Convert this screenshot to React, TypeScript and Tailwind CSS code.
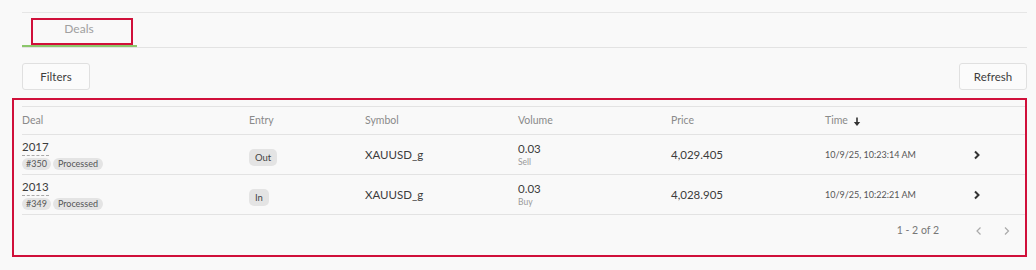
const rows = [
  { deal: "2017", id: "#350", entry: "Out", symbol: "XAUUSD_g", volume: "0.03", side: "Sell", price: "4,029.405", time: "10/9/25, 10:23:14 AM" },
  { deal: "2013", id: "#349", entry: "In", symbol: "XAUUSD_g", volume: "0.03", side: "Buy", price: "4,028.905", time: "10/9/25, 10:22:21 AM" },
];

const cols = "grid grid-cols-[227px_116px_153px_153px_154px_1fr_55px] items-center";

function Chevron({ className = "" }: { className?: string }) {
  return (
    <svg width="8" height="10" viewBox="0 0 8 10" className={className}>
      <path d="M2 1.5 L5.5 5 L2 8.5" fill="none" stroke="currentColor" strokeWidth="2" />
    </svg>
  );
}

export default function App() {
  return (
    <div className="min-h-screen bg-[#f9f9f9] pl-[22px] pr-[9px] pt-[12px] text-[#3c3c3c]" style={{ fontFamily: "Lato, 'Noto Sans', sans-serif" }}>
      <div className="border-t border-[#e6e6e6]">
        <div className="flex border-b border-[#e3e3e3]">
          <div className="relative flex h-[34px] w-[115px] items-center justify-center border-b-2 border-[#8cc76b] text-[12px] text-[#a0a0a0]">
            <span className="-ml-[1px]">Deals</span>
            <div className="absolute left-[9px] top-[5px] h-[27px] w-[102px] border-2 border-[#d0103a]" />
          </div>
        </div>
      </div>

      <div className="mt-[15px] flex justify-between">
        <button className="h-[27px] w-[68px] rounded-[3px] border border-[#e0e0e0] bg-[#fbfbfb] text-[11.5px] text-[#3c3c3c]">Filters</button>
        <button className="h-[27px] w-[68px] rounded-[3px] border border-[#e0e0e0] bg-[#fbfbfb] text-[11.5px] text-[#3c3c3c]">Refresh</button>
      </div>

      <div className="-ml-[10px] mt-[8px] border-2 border-[#d0103a] pb-[8px] pl-[8px] pt-[6px]">
        <div className={`${cols} h-[29px] border-y border-[#e3e3e3] text-[10.5px] text-[#8a8a8a]`}>
          <div>Deal</div>
          <div>Entry</div>
          <div>Symbol</div>
          <div>Volume</div>
          <div>Price</div>
          <div className="flex items-center gap-[5px]">
            Time
            <svg width="8" height="10" viewBox="0 0 8 10" className="mt-[2px] text-[#333]">
              <path d="M4 0.5 V7" stroke="currentColor" strokeWidth="1.6" />
              <path d="M0.8 5 L4 9 L7.2 5 Z" fill="currentColor" />
            </svg>
          </div>
          <div />
        </div>

        {rows.map((r) => (
          <div key={r.deal} className={`${cols} h-[40px] border-b border-[#e3e3e3]`}>
            <div className="flex flex-col items-start pt-[1px]">
              <span className="border-b border-dashed border-[#aaa] pb-[1px] text-[11.5px] leading-[14px]">{r.deal}</span>
              <div className="mt-[2px] flex gap-[2px]">
                <span className="rounded-full bg-[#e4e4e4] px-[4px] text-[9px] leading-[12px] text-[#555]">{r.id}</span>
                <span className="rounded-full bg-[#e4e4e4] px-[5px] text-[9px] leading-[12px] text-[#555]">Processed</span>
              </div>
            </div>
            <div>
              <span className="inline-block rounded-[5px] bg-[#e4e4e4] px-[6px] py-[3px] text-[9.5px] leading-[11px] text-[#444]">{r.entry}</span>
            </div>
            <div className="text-[11.5px]">{r.symbol}</div>
            <div className="flex flex-col">
              <span className="text-[11.5px] leading-[15px]">{r.volume}</span>
              <span className="mt-[1px] text-[8.5px] leading-[11px] text-[#999]">{r.side}</span>
            </div>
            <div className="text-[11.5px]">{r.price}</div>
            <div className="text-[9px] text-[#555]">{r.time}</div>
            <div className="pl-[3px] text-[#333]">
              <Chevron />
            </div>
          </div>
        ))}

        <div className="flex h-[32px] items-center justify-end pr-[14px] text-[#aaa]">
          <span className="mr-[36px] text-[10.5px] text-[#777]">1 - 2 of 2</span>
          <svg width="8" height="10" viewBox="0 0 8 10" className="mr-[20px]">
            <path d="M5.5 1.5 L2 5 L5.5 8.5" fill="none" stroke="currentColor" strokeWidth="1.2" />
          </svg>
          <svg width="8" height="10" viewBox="0 0 8 10">
            <path d="M2 1.5 L5.5 5 L2 8.5" fill="none" stroke="currentColor" strokeWidth="1.2" />
          </svg>
        </div>
      </div>
    </div>
  );
}
